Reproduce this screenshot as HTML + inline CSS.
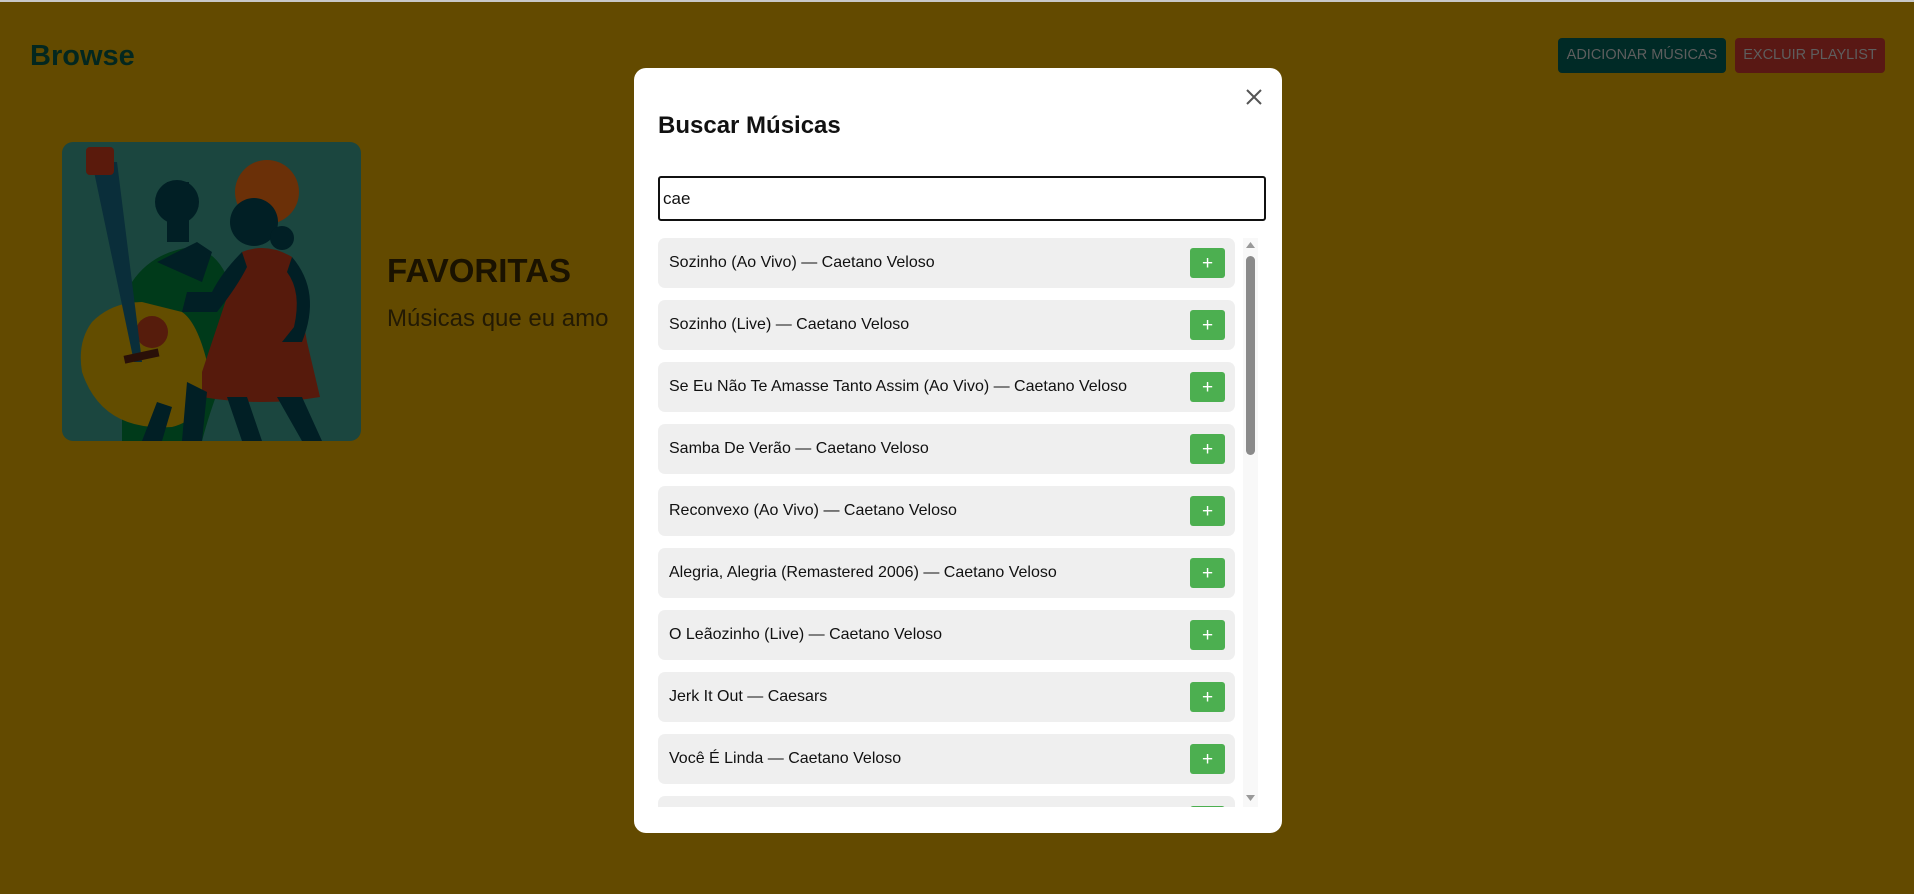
<!DOCTYPE html>
<html><head><meta charset="utf-8"><style>
*{box-sizing:border-box;margin:0;padding:0}
body{width:1914px;height:894px;background:#634a00;font-family:"Liberation Sans",Arial,sans-serif;position:relative;overflow:hidden}
.topline{position:absolute;left:0;top:0;width:1914px;height:2px;background:#c8c8c8}
.browse{position:absolute;left:30px;top:40px;font-size:29px;font-weight:bold;color:#03271f}
.btn{position:absolute;top:38px;height:35px;border-radius:4px;color:#5e5e5e;font-size:14.5px;line-height:35px;text-align:center}
.art{position:absolute;left:62px;top:142px;width:299px;height:299px;border-radius:11px;background:#1b463f;overflow:hidden}
.fav{position:absolute;left:387px;top:252px;font-size:33px;font-weight:bold;color:#1a1200}
.sub{position:absolute;left:387px;top:305px;font-size:24px;color:#231a04}
.modal{position:absolute;left:634px;top:68px;width:648px;height:765px;background:#fff;border-radius:12px}
.close{position:absolute;left:1245px;top:88px;width:18px;height:18px}
.title{position:absolute;left:658px;top:112px;font-size:24px;font-weight:bold;color:#111}
.input{position:absolute;left:658px;top:176px;width:608px;height:45px;border:2px solid #111;border-radius:3px;font-size:17px;padding:11px 3px;color:#111}
.list{position:absolute;left:658px;top:238px;width:600px;height:569px;overflow:hidden}
.row{position:absolute;left:0;width:577px;height:50px;background:#efefef;border-radius:7px;font-size:16px;color:#111;line-height:50px;padding-left:11px}
.plus{position:absolute;right:10px;top:10px;width:35px;height:30px;background:#4caf50;border-radius:3px;color:#fff;font-size:19px;line-height:32px;text-align:center}
.track{position:absolute;left:585px;top:0;width:15px;height:569px;background:#f8f8f8}
.thumb{position:absolute;left:588px;top:18px;width:9px;height:199px;background:#8a8a8a;border-radius:5px}
</style></head><body>
<div class="topline"></div>
<div class="browse">Browse</div>
<div class="btn" style="left:1558px;width:168px;background:#002a26">ADICIONAR MÚSICAS</div>
<div class="btn" style="left:1735px;width:150px;background:#591814">EXCLUIR PLAYLIST</div>
<div class="art"><svg width="299" height="299" viewBox="0 0 299 299">
<circle cx="115" cy="60" r="22" fill="#011f25"/>
<path d="M60 240 Q50 180 70 140 Q90 110 130 105 Q160 110 170 150 L175 200 Q150 260 140 299 L60 299Z" fill="#003a1a"/>
<path d="M95 120 L135 100 L150 110 L140 140 Z" fill="#011f25"/>
<rect x="105" y="40" width="22" height="60" fill="#011f25"/>
<path d="M20 230 Q40 290 110 285 Q150 275 145 220 Q135 180 120 170 L80 160 Q50 160 30 180 Q15 200 20 230Z" fill="#634d00"/>
<circle cx="90" cy="190" r="16" fill="#561c0c"/>
<path d="M30 20 L55 20 L80 220 L72 220Z" fill="#0a2e3a"/>
<rect x="24" y="5" width="28" height="28" rx="4" fill="#5a1a0c"/>
<rect x="62" y="210" width="35" height="8" fill="#2a1008" transform="rotate(-12 80 214)"/>
<circle cx="205" cy="50" r="32" fill="#6b3008"/>
<circle cx="192" cy="80" r="24" fill="#011f25"/>
<circle cx="220" cy="96" r="12" fill="#011f25"/>
<path d="M140 230 L180 110 Q205 100 230 115 L245 200 L258 255 Q200 265 140 255Z" fill="#561a0c"/>
<path d="M180 110 Q160 130 150 150 L125 150 L120 170 L155 170 Q175 145 185 125Z" fill="#011f25"/>
<path d="M230 115 Q260 150 240 200 L220 200 L232 185 Q240 150 225 130Z" fill="#011f25"/>
<path d="M165 255 L180 299 L200 299 L185 255Z M215 255 L240 299 L260 299 L240 255Z" fill="#011f25"/>
<path d="M95 260 L80 299 L100 299 L110 265Z M125 240 L120 299 L140 299 L145 250Z" fill="#011f25"/>
</svg></div>
<div class="fav">FAVORITAS</div>
<div class="sub">Músicas que eu amo</div>
<div class="modal"></div>
<svg class="close" viewBox="0 0 18 18"><path d="M2 2L16 16M16 2L2 16" stroke="#555" stroke-width="2"/></svg>
<div class="title">Buscar Músicas</div>
<div class="input">cae</div>
<div class="list">
<div class="row" style="top:0">Sozinho (Ao Vivo) — Caetano Veloso<div class="plus">+</div></div>
<div class="row" style="top:62px">Sozinho (Live) — Caetano Veloso<div class="plus">+</div></div>
<div class="row" style="top:124px">Se Eu Não Te Amasse Tanto Assim (Ao Vivo) — Caetano Veloso<div class="plus">+</div></div>
<div class="row" style="top:186px">Samba De Verão — Caetano Veloso<div class="plus">+</div></div>
<div class="row" style="top:248px">Reconvexo (Ao Vivo) — Caetano Veloso<div class="plus">+</div></div>
<div class="row" style="top:310px">Alegria, Alegria (Remastered 2006) — Caetano Veloso<div class="plus">+</div></div>
<div class="row" style="top:372px">O Leãozinho (Live) — Caetano Veloso<div class="plus">+</div></div>
<div class="row" style="top:434px">Jerk It Out — Caesars<div class="plus">+</div></div>
<div class="row" style="top:496px">Você É Linda — Caetano Veloso<div class="plus">+</div></div>
<div class="row" style="top:558px"><div class="plus">+</div></div>
<div class="track"></div>
<div class="thumb"></div>
<svg style="position:absolute;left:588px;top:4px" width="9" height="6"><path d="M0 6L4.5 0L9 6Z" fill="#999"/></svg>
<svg style="position:absolute;left:588px;top:557px" width="9" height="6"><path d="M0 0L4.5 6L9 0Z" fill="#999"/></svg>
</div>
</body></html>
